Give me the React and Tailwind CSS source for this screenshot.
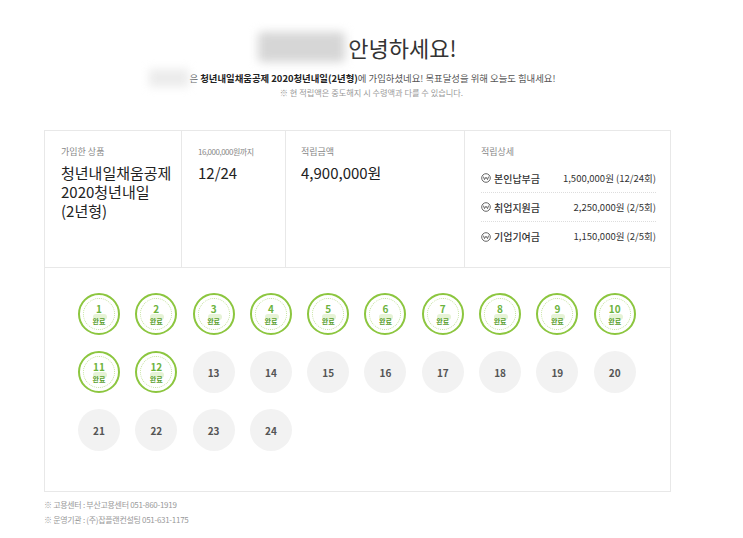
const KR = { fontFamily: '"Noto Sans CJK KR", "Noto Sans", sans-serif' };

const details = [
  { label: '본인납부금', value: '1,500,000원 (12/24회)' },
  { label: '취업지원금', value: '2,250,000원 (2/5회)' },
  { label: '기업기여금', value: '1,150,000원 (2/5회)' },
];

const WonIcon = () => (
  <svg width="10" height="10" viewBox="0 0 10 10" className="shrink-0">
    <circle cx="5" cy="5" r="4.3" fill="none" stroke="#555" strokeWidth="0.9" />
    <path d="M2.4 3.6 L3.5 6.6 L5 4.2 L6.5 6.6 L7.6 3.6" fill="none" stroke="#555" strokeWidth="0.9" />
  </svg>
);

const Round = ({ n, done }) =>
  done ? (
    <div className="relative w-[42px] h-[42px] rounded-full border-2 border-[#8cc63f] bg-white flex items-center justify-center">
      <div className="absolute inset-[3px] rounded-full border border-dotted border-[#c3e29c]" />
      <div className="absolute top-[19px] left-[13px] w-[14px] h-[6px] rounded-full bg-[#e6f3d6]" />
      <div className="relative flex flex-col items-center">
        <span className="text-[10px] leading-[12px] font-bold text-[#6cb33e]">{n}</span>
        <span className="mt-[2px] text-[7px] leading-[9px] font-bold text-[#5aa02e]">완료</span>
      </div>
    </div>
  ) : (
    <div className="w-[42px] h-[42px] rounded-full bg-[#f2f2f2] flex items-center justify-center text-[10px] font-bold text-[#555]">
      {n}
    </div>
  );

export default function App() {
  return (
    <div className="w-[743px] h-[538px] bg-white text-[#333] pt-[30px]" style={KR}>
      {/* greeting */}
      <div className="flex justify-center items-center h-[34px] pr-[28px]">
        <div className="w-[87px] h-[30px] bg-[#d6d6d6] blur-[5px] rounded" />
        <span className="ml-[3px] text-[22px] leading-none text-[#333]">안녕하세요!</span>
      </div>
      <div className="mt-[7px] flex justify-center items-center h-[14px] text-[9.4px] leading-[14px] text-[#555] pr-[38px]">
        <div className="w-[40px] h-[18px] bg-[#ececec] blur-[4px]" />
        <span>은 <b className="text-[#222]">청년내일채움공제 2020청년내일(2년형)</b>에 가입하셨네요! 목표달성을 위해 오늘도 힘내세요!</span>
      </div>
      <p className="text-center text-[8.2px] leading-[14px] text-[#999]">※ 현 적립액은 중도해지 시 수령액과 다를 수 있습니다.</p>

      {/* summary box */}
      <div className="mt-[31px] ml-[44px] w-[627px] border border-[#e8e8e8]">
        <div className="flex h-[137px] border-b border-[#e8e8e8]">
          <div className="w-[136px] pl-[16px] pt-[15px]">
            <p className="text-[9px] text-[#888] leading-[12px]">가입한 상품</p>
            <p className="mt-[5px] text-[15px] leading-[19px] text-[#222]">청년내일채움공제<br />2020청년내일<br />(2년형)</p>
          </div>
          <div className="w-[104px] border-l border-[#e8e8e8] pl-[16px] pt-[15px]">
            <p className="text-[8px] tracking-[-0.5px] text-[#888] leading-[12px]">16,000,000원까지</p>
            <p className="mt-[5px] text-[15px] leading-[19px] text-[#222]">12/24</p>
          </div>
          <div className="w-[179px] border-l border-[#e8e8e8] pl-[15px] pt-[15px]">
            <p className="text-[9px] text-[#888] leading-[12px]">적립금액</p>
            <p className="mt-[5px] text-[15px] leading-[19px] text-[#222]">4,900,000원</p>
          </div>
          <div className="flex-1 border-l border-[#e8e8e8] pl-[16px] pr-[14px] pt-[15px]">
            <p className="text-[9px] text-[#888] leading-[12px]">적립상세</p>
            <div className="mt-[6px]">
              {details.map((d, i) => (
                <div
                  key={d.label}
                  className={`flex items-center justify-between h-[29px] ${i < 2 ? 'border-b border-dotted border-[#ddd]' : ''}`}
                >
                  <span className="flex items-center gap-[3px] text-[10px] font-medium text-[#333]">
                    <WonIcon />
                    {d.label}
                  </span>
                  <span className="text-[9.5px] text-[#333]">{d.value}</span>
                </div>
              ))}
            </div>
          </div>
        </div>

        <div className="pl-[33px] pt-[25px] pb-[40px] grid grid-cols-[repeat(10,42px)] gap-x-[15.3px] gap-y-[16px]">
          {Array.from({ length: 24 }, (_, i) => (
            <Round key={i} n={i + 1} done={i < 12} />
          ))}
        </div>
      </div>

      {/* footer */}
      <div className="mt-[5px] ml-[44px] text-[8px] leading-[15px] text-[#999] tracking-[-0.3px]">
        <p>※ 고용센터 : 부산고용센터 051-860-1919</p>
        <p>※ 운영기관 : (주)잡플랜컨설팅 051-631-1175</p>
      </div>
    </div>
  );
}
